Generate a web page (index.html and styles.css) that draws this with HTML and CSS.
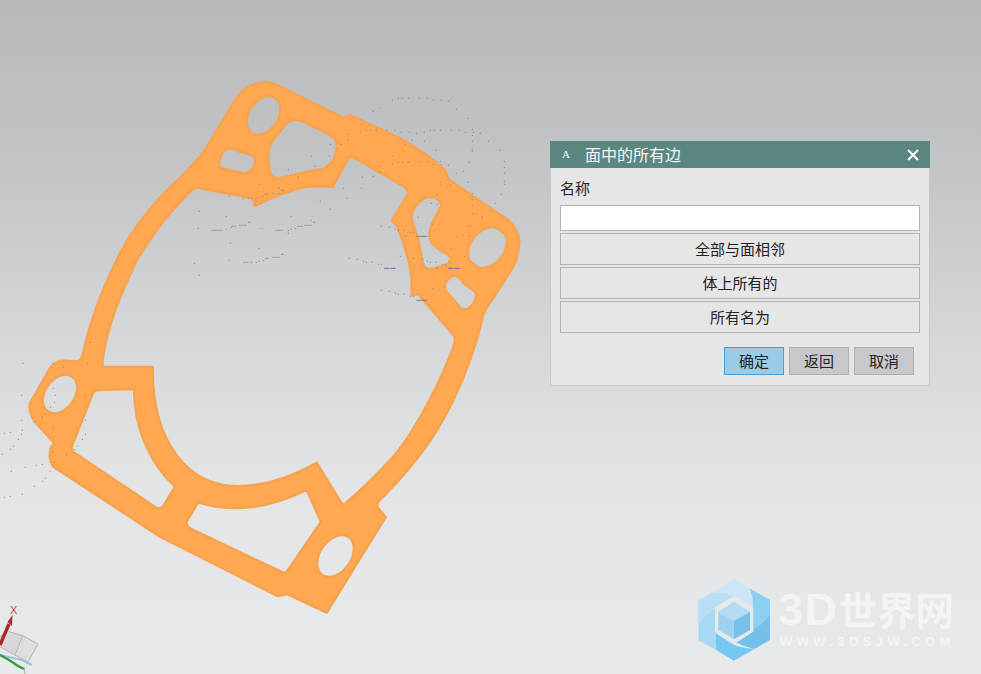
FILE: index.html
```html
<!DOCTYPE html>
<html lang="zh">
<head>
<meta charset="utf-8">
<title>面中的所有边</title>
<link rel="stylesheet" href="styles.css">
</head>
<body>
<main class="viewport">
  <svg class="scene" viewBox="0 0 981 674" width="981" height="674" aria-hidden="true">
    <path class="gasket" fill-rule="evenodd" d="M265 82Q271 82 277 85L343.3 117.7Q347 117 350 115L400 138.3Q425 152 445 170Q447 174 448.3 179.3L508 220Q519 230 519.3 242Q519 255 513.3 266.7L492 300Q486 308 483 315C478 340 462 390 437 430C420 458 400 480 378 502Q377 506 378 508L385.7 517L326.7 612.7L286.7 594Q282 596 276.7 595.7L160 536.7L53.3 466.7Q49 460 50 453Q50 447 54 443L35 422Q28 412 30 403L50 368Q56 360 65 360.7L77 361.5Q81 360 82 357C90 320 105 283 120 253C135 225 160 195 180 178L203 153L235 100Q245 84 265 82Z
    M195 187.3L253 198.3L255 206Q280 193 306.7 186.7Q320 186 332.7 186.7L348.3 158.3Q351 156 353.3 157.3L405 187.3Q408 190 408.3 193.3L391.7 220.7L397 226Q405 245 410 267Q412 280 411.7 295L418.3 294L455 337Q455 342 453 348C445 370 420 425 393 457Q370 482 347 502Q344 505 342 504L316.7 462.7C290 478 262 487 233 486C190 484 152 445 152.7 367L103 367Q102 363 103 357C108 325 120 295 137 260C152 235 172 208 195 187.3Z
    M231.7 148.3Q235 149 238 151L251.7 155Q255 157 255 160Q255 165 252.7 168.3Q249 173 245 173.3L221.7 168.3Q218 166 219.3 163.3Q220 156 223.3 151.7Q227 148 231.7 148.3Z
    M295 120Q299 120 303.3 121.7L330 135Q337 140 336.7 145Q337 153 333.3 160Q329 166 323.3 169.3Q310 171 300 173.3L278.3 178.3Q272 178 270 173.3Q268 163 268.3 153.3Q269 146 273.3 140L285 125Q290 120 295 120Z
    M430 196.7Q436 197 440 201.7Q442 204 441 206.7Q433 220 430 230Q428 238 431.7 243.3Q438 250 448.3 255Q451 257 450 260Q449 264 446.7 265L430 269.3Q425 268 423.3 265L418.3 240L411.7 220Q411 211 416.7 205Q423 197 430 196.7Z
    M456.7 276Q460 278 463.3 283.3L475 291.7Q477 295 475 300Q472 307 466.7 309Q463 310 460 307.3L446.7 291.7Q444 288 445 285Q446 280 450 278Q453 275 456.7 276Z
    M96.7 390L134 389C134 425 148 462 175 486.7L163 506.7Q160 509 156.7 508L73 451.7Q71 449 71.7 446.7L93 393Q94 391 96.7 390Z
    M198.3 502.3C235 514 270 508 306.7 490L321 521.7L288 570Q286 573 283.3 572.7L190 528.3Q186 526 186.7 521.7Z
    M252 133.2A21 14.5 -57 1 1 275 97.8A21 14.5 -57 1 1 252 133.2Z
    M474 263.9A21.5 14.5 -50 1 1 501 231.1A21.5 14.5 -50 1 1 474 263.9Z
    M48 411.2A21 14 -55 1 1 72 376.8A21 14 -55 1 1 48 411.2Z
    M322.3 574.9A23 15.5 -55 1 1 348.7 537.1A23 15.5 -55 1 1 322.3 574.9Z"/>

    <g transform="translate(180 70) scale(.3333)">
      <path class="dots" d="M637 91h0M655 85h0M667 85h0M685 85h0M718 85h0M742 85h0M760 91h0M784 91h0M805 94h0M829 118h0M865 145h0M601 115h0M580 124h0M877 178h0M880 187h0M901 190h0M925 214h0M961 241h0M973 274h0M973 292h0M973 310h0M973 334h0M973 343h0M964 373h0M946 400h0M544 163h0M502 193h0M541 187h0M559 181h0M571 181h0M589 181h0M622 181h0M646 181h0M664 187h0M688 187h0M709 190h0M733 187h0M751 181h0M763 181h0M781 181h0M814 181h0M838 181h0M856 187h0M877 196h0M877 214h0M877 238h0M877 244h0M868 277h0M850 304h0M829 310h0M811 346h0M781 337h0M781 346h0M505 211h0M484 223h0M451 223h0M394 259h0M448 259h0M406 289h0M325 298h0M355 322h0M238 343h0M298 355h0M298 370h0M280 370h0M262 373h0M256 373h0M250 379h0M238 382h0M229 385h0M214 385h0M205 385h0M190 385h0M229 394h0M148 379h0M697 211h0M733 214h0M676 223h0M769 241h0M640 259h0M655 277h0M667 277h0M685 277h0M718 277h0M742 277h0M760 283h0M781 274h0M784 283h0M805 286h0M637 283h0M598 289h0M601 307h0M580 319h0M547 322h0M490 355h0M544 355h0M502 385h0M421 394h0M451 418h0M865 337h0M877 370h0M877 388h0M907 442h0M868 469h0M850 496h0M868 499h0M853 559h0M811 538h0M772 373h0M754 400h0M772 403h0M715 442h0M757 463h0M604 469h0M628 472h0M646 478h0M655 481h0M673 481h0M691 487h0M700 487h0M676 499h0M661 559h0M700 565h0M727 568h0M742 574h0M751 577h0M769 577h0M787 583h0M796 583h0M772 595h0M508 565h0M532 568h0M550 574h0M559 577h0M577 577h0M595 583h0M604 583h0M604 661h0M628 664h0M646 670h0M655 673h0M673 673h0M691 679h0M700 679h0M757 655h0M58 424h0M139 439h0M55 475h0M151 520h0M238 535h0M148 571h0M43 580h0M58 616h0M334 439h0M244 475h0M325 490h0M394 451h0M139 478h0M154 472h0M325 481h0M334 478h0M346 475h0M214 577h0M229 577h0M238 574h0M250 571h0"/>
      <path class="dotted" d="M94 481h36M157 469h13M178 466h21M286 481h24M352 469h15M373 466h21M190 577h15M256 565h12M277 562h21"/>
      <path class="dashes" d="M205 457h6M400 457h6M304 553h6M709 499h33M709 691h33M304 361h7"/>
      <path class="dashes-violet" d="M613 595h15M631 595h15M805 595h15M823 595h15"/>
      <path class="dots-green" d="M877 406h0M877 432h0"/>
    </g>
    <g transform="translate(0 340) scale(.3333)">
      <path class="dots" d="M70 70h0M160 70h0M190 82h0M262 70h0M271 7h0M65 166h0M166 166h0M256 166h0M160 145h0M163 187h0M151 202h0M136 223h0M127 232h0M103 247h0M64 241h0M160 262h0M256 241h0M67 271h0M64 283h0M55 298h0M40 319h0M31 328h0M13 280h0M31 277h0M7 343h0M256 283h0M247 298h0M232 319h0M223 328h0M199 343h0M160 337h0M163 367h0M127 373h0M109 376h0M76 382h0M34 394h0M151 394h0M136 415h0M127 424h0M103 439h0M67 463h0M31 469h0M13 472h0"/>
    </g>

    <g class="triad">
      <path class="cube-face" d="M0 637L7 631L22.7 635.7L15 655L0 647Z"/>
      <path class="cube-side" d="M22.7 635.7L38 644L28 662L15 655Z"/>
      <path class="cube-edge" d="M0 637L7 631L22.7 635.7L38 644L28 662L15 655L0 647M22.7 635.7L15 655"/>
      <path class="axis-blue" d="M0 655L22 660L32 665"/>
      <path class="axis-green" d="M0 655Q10 660 18 666L24 669"/>
      <path class="axis-green-thin" d="M24 667L25 674"/>
      <path class="axis-red" d="M0 645L9 624"/>
      <path class="axis-red-head" d="M7.5 622L12.5 615L12 626Z"/>
      <text class="axis-label" x="10" y="614">X</text>
    </g>

    <g class="logo" transform="translate(690 570) scale(.3333)">
      <path fill="#cde6f5" d="M132 28L178 55Q192 85 188 112L132 78Q100 64 68 68Z"/>
      <path fill="#8bd0f3" d="M178 55L240 90V132Q218 168 180 180V125L188 112Q192 85 178 55Z"/>
      <path fill="#74c0e8" d="M240 132V210L195 236Q165 232 135 215L180 180Q218 168 240 132Z"/>
      <path fill="#74c8f2" d="M195 236L132 272L78 240Q73 215 78 190L132 225Q165 236 195 236Z"/>
      <path fill="#a8d8f3" d="M78 240L25 210V165Q45 128 85 115V180L78 190Q73 215 78 240Z"/>
      <path fill="#b9dff5" d="M25 165V90L68 68Q100 64 132 78L85 115Q45 128 25 165Z"/>
      <path fill="#e7e8ea" d="M132 78L190 112V185L132 222L75 185V112Z"/>
      <path fill="#b5dcf5" d="M132 95L180 125L132 152L85 125Z"/>
      <path fill="#9fd2f1" d="M85 125L132 152V208L85 180Z"/>
      <path fill="#78c2ea" d="M180 125V180L132 208V152Z"/>
    </g>
  </svg>

  <div class="watermark">
    <div class="watermark-name"><span class="watermark-latin">3D</span>世界网</div>
    <div class="watermark-url">WWW.3DSJW.COM</div>
  </div>

  <section class="dialog">
    <header class="dialog-title">
      <span class="dialog-icon">A</span>
      <h1 class="dialog-heading">面中的所有边</h1>
      <svg class="dialog-close" width="12" height="12" viewBox="0 0 12 12" aria-hidden="true"><path d="M1 1L11 11M11 1L1 11"/></svg>
    </header>
    <div class="dialog-body">
      <label class="field-label" for="name">名称</label>
      <input class="field-input" id="name" type="text">
      <div class="option-list">
        <button class="option" type="button">全部与面相邻</button>
        <button class="option" type="button">体上所有的</button>
        <button class="option" type="button">所有名为</button>
      </div>
      <div class="dialog-actions">
        <button class="action action-primary" type="button">确定</button>
        <button class="action" type="button">返回</button>
        <button class="action" type="button">取消</button>
      </div>
    </div>
  </section>
</main>
</body>
</html>
```
FILE: styles.css
```css
* { box-sizing: border-box; }
html, body { margin: 0; height: 100%; overflow: hidden; }
body { font-family: "Noto Sans CJK SC", "Liberation Sans", sans-serif; color: #222; }

.viewport {
  position: relative;
  width: 981px;
  height: 674px;
  overflow: hidden;
  background: linear-gradient(180deg, #b8b9bb 0%, #c3c4c6 25%, #d6d7d9 50%, #e3e4e6 72%, #e8e9eb 100%);
}
.scene { display: block; }

.gasket { fill: #ffa851; stroke: #f6a350; stroke-width: 2.4; stroke-linejoin: round; }
.dots, .dashes, .dashes-violet, .dots-green, .dotted { fill: none; stroke-width: 3; stroke-linecap: butt; }
.dots { stroke: #77777e; stroke-width: 2.8; stroke-linecap: square; }
.dotted { stroke: #77777a; stroke-dasharray: 3 3; }
.dashes { stroke: #7d7d80; }
.dashes-violet { stroke: #6a62a8; }
.dots-green { stroke: #4f9a62; stroke-linecap: square; }

.cube-face { fill: #d8d8da; }
.cube-side { fill: #dededf; }
.cube-edge { fill: none; stroke: #b5b5b8; stroke-width: 1; }
.axis-blue { fill: none; stroke: #a9bce4; stroke-width: 2; }
.axis-green { fill: none; stroke: #2f9a3a; stroke-width: 2.4; }
.axis-green-thin { fill: none; stroke: #8dbf8f; stroke-width: 1; }
.axis-red { fill: none; stroke: #a8262c; stroke-width: 3.4; }
.axis-red-head { fill: #a8262c; }
.axis-label { font-family: "Liberation Sans", sans-serif; font-size: 11px; fill: #c8404a; }

.watermark {
  position: absolute;
  left: 778px;
  top: 586px;
  width: 180px;
  color: #f3f4f6;
}
.watermark-name {
  font-family: "Liberation Sans", "Noto Sans CJK SC", sans-serif;
  font-size: 38.5px;
  line-height: 48px;
  font-weight: 700;
  white-space: nowrap;
}
.watermark-latin { font-size: 45px; line-height: 48px; letter-spacing: 1.5px; }
.watermark-url {
  font-family: "Liberation Sans", sans-serif;
  font-weight: 700;
  font-size: 13px;
  line-height: 12px;
  letter-spacing: 4.4px;
  margin-left: 2px;
  white-space: nowrap;
}

.dialog {
  position: absolute;
  left: 550px;
  top: 141px;
  width: 380px;
  height: 245px;
  background: #e6e6e6;
  border: 1px solid #c6c7c8;
  border-top: 0;
  display: flex;
  flex-direction: column;
}
.dialog-title {
  height: 27px;
  margin: 0 -1px;
  padding: 0 11px 0 12px;
  background: #5b8780;
  color: #fff;
  display: flex;
  align-items: center;
}
.dialog-icon {
  font-family: "Liberation Serif", serif;
  font-size: 11px;
  width: 23px;
  line-height: 1;
}
.dialog-heading { margin: 0; flex: 1; font-size: 16px; font-weight: 400; line-height: 27px; color: #f4f8f7; }
.dialog-close { fill: none; stroke: #fff; stroke-width: 2; }

.dialog-body { padding: 0 9px; display: flex; flex-direction: column; flex: 1; }
.field-label { font-size: 15px; line-height: 20px; margin-top: 10px; }
.field-input {
  display: block;
  width: 100%;
  height: 26px;
  margin-top: 7px;
  background: #fff;
  border: 1px solid #b2b2b2;
  border-radius: 0;
  padding: 0 4px;
  outline: 0;
}
.option-list { display: flex; flex-direction: column; gap: 2px; margin-top: 2px; }
.option {
  height: 32px;
  padding: 0;
  background: #e6e6e6;
  border: 1px solid #b2b2b2;
  border-radius: 0;
  font: inherit;
  font-size: 15px;
  line-height: 30px;
  color: #222;
}
.dialog-actions { display: flex; justify-content: flex-end; gap: 5px; margin-top: 14px; padding-right: 6px; }
.action {
  width: 60px;
  height: 28px;
  padding: 0;
  background: #c8c8cc;
  border: 1px solid #b0b0b2;
  border-radius: 0;
  font: inherit;
  font-size: 15px;
  line-height: 26px;
  color: #222;
}
.action-primary { background: #98cce8; border-color: #4c9fd6; }
```
